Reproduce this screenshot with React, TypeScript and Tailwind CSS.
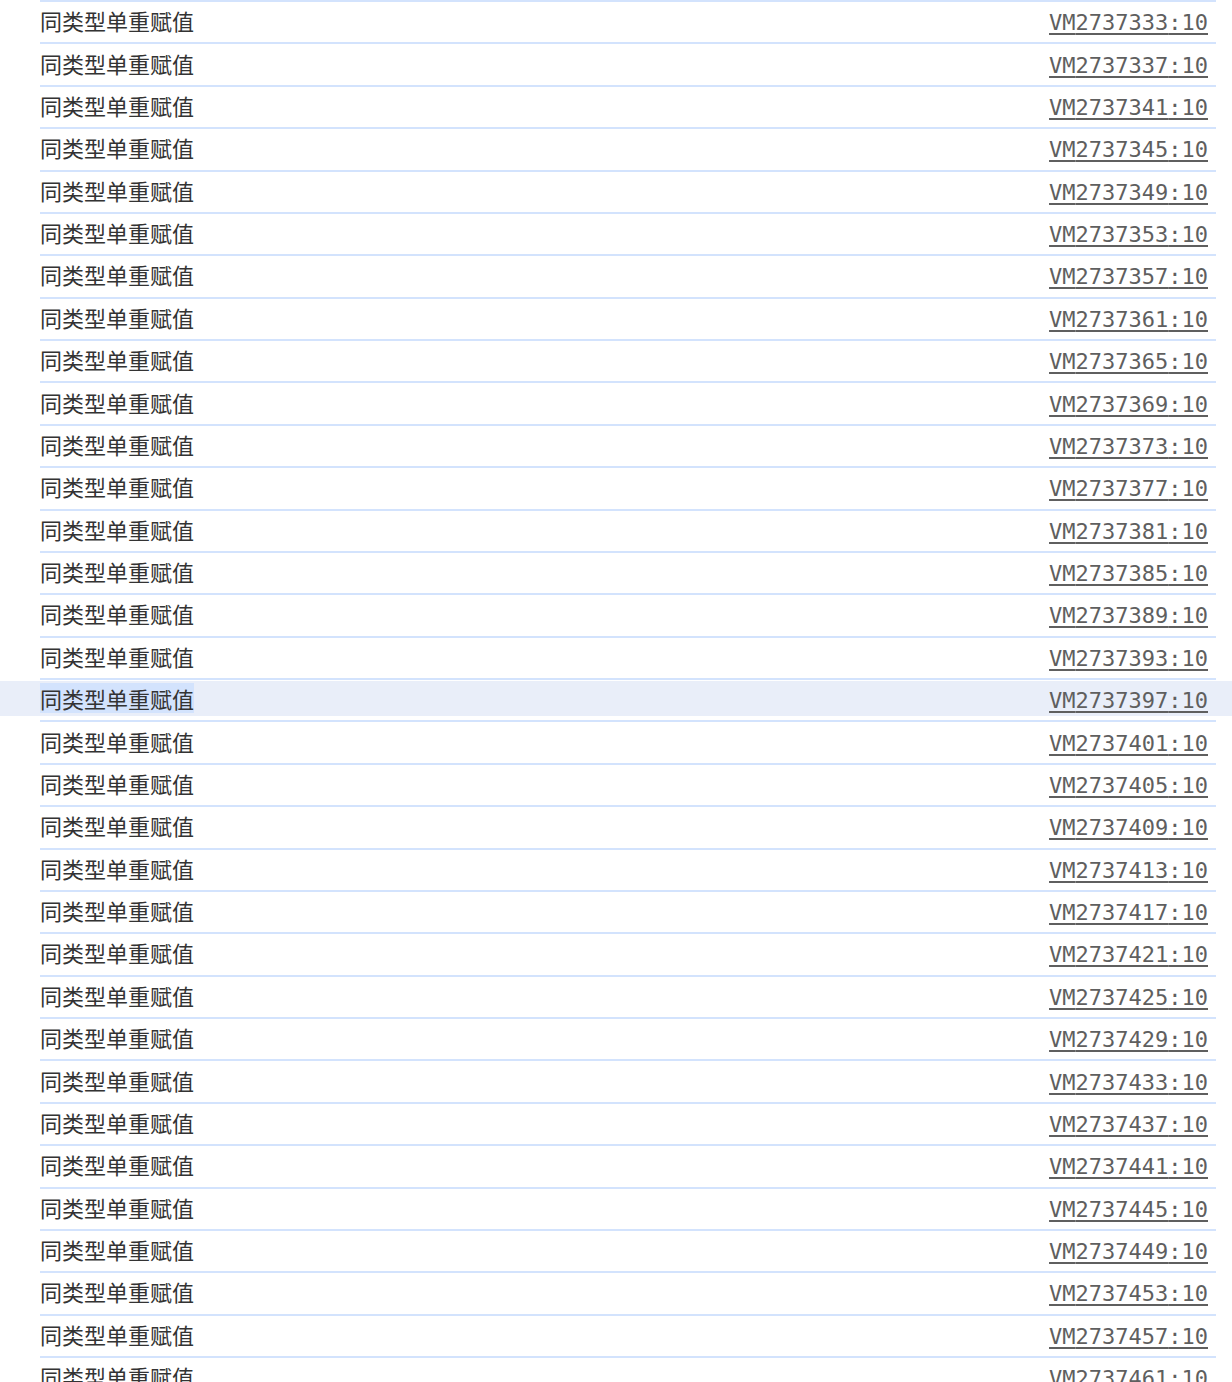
import React from "react";

const rows = Array.from({ length: 34 }, (_, i) => 2737333 + i * 4);

export default function App() {
  return (
    <div className="w-[1232px] h-[1382px] overflow-hidden bg-white">
      {rows.map((n, i) => {
        const active = i === 16;
        return (
          <div key={n} className="h-[42.375px] flex flex-col">
            <div className="ml-[40px] mr-[16px] h-[2px] bg-[#d3e3fd] shrink-0" />
            <div className="flex-1 relative">
              {active && <div className="absolute left-0 right-0 top-[1px] bottom-[4px] bg-[#e9eef9]" />}
              <div className="relative h-full ml-[40px] mr-[16px] pr-[8px] flex items-center justify-between">
                <span
                  className={
                    "relative -top-[2px] text-[22px] leading-[30px] text-[#333333] " +
                    (active ? "bg-[#d3e3fd]" : "")
                  }
                  style={{ fontFamily: '"Noto Sans CJK SC", "Noto Sans", sans-serif' }}
                >
                  同类型单重赋值
                </span>
                <span
                  className="relative top-[1px] text-[22px] leading-[30px] text-[#5f5f5f] underline underline-offset-[3px]"
                  style={{ fontFamily: '"DejaVu Sans Mono", "Liberation Mono", monospace' }}
                >
                  VM{n}:10
                </span>
              </div>
            </div>
          </div>
        );
      })}
    </div>
  );
}
